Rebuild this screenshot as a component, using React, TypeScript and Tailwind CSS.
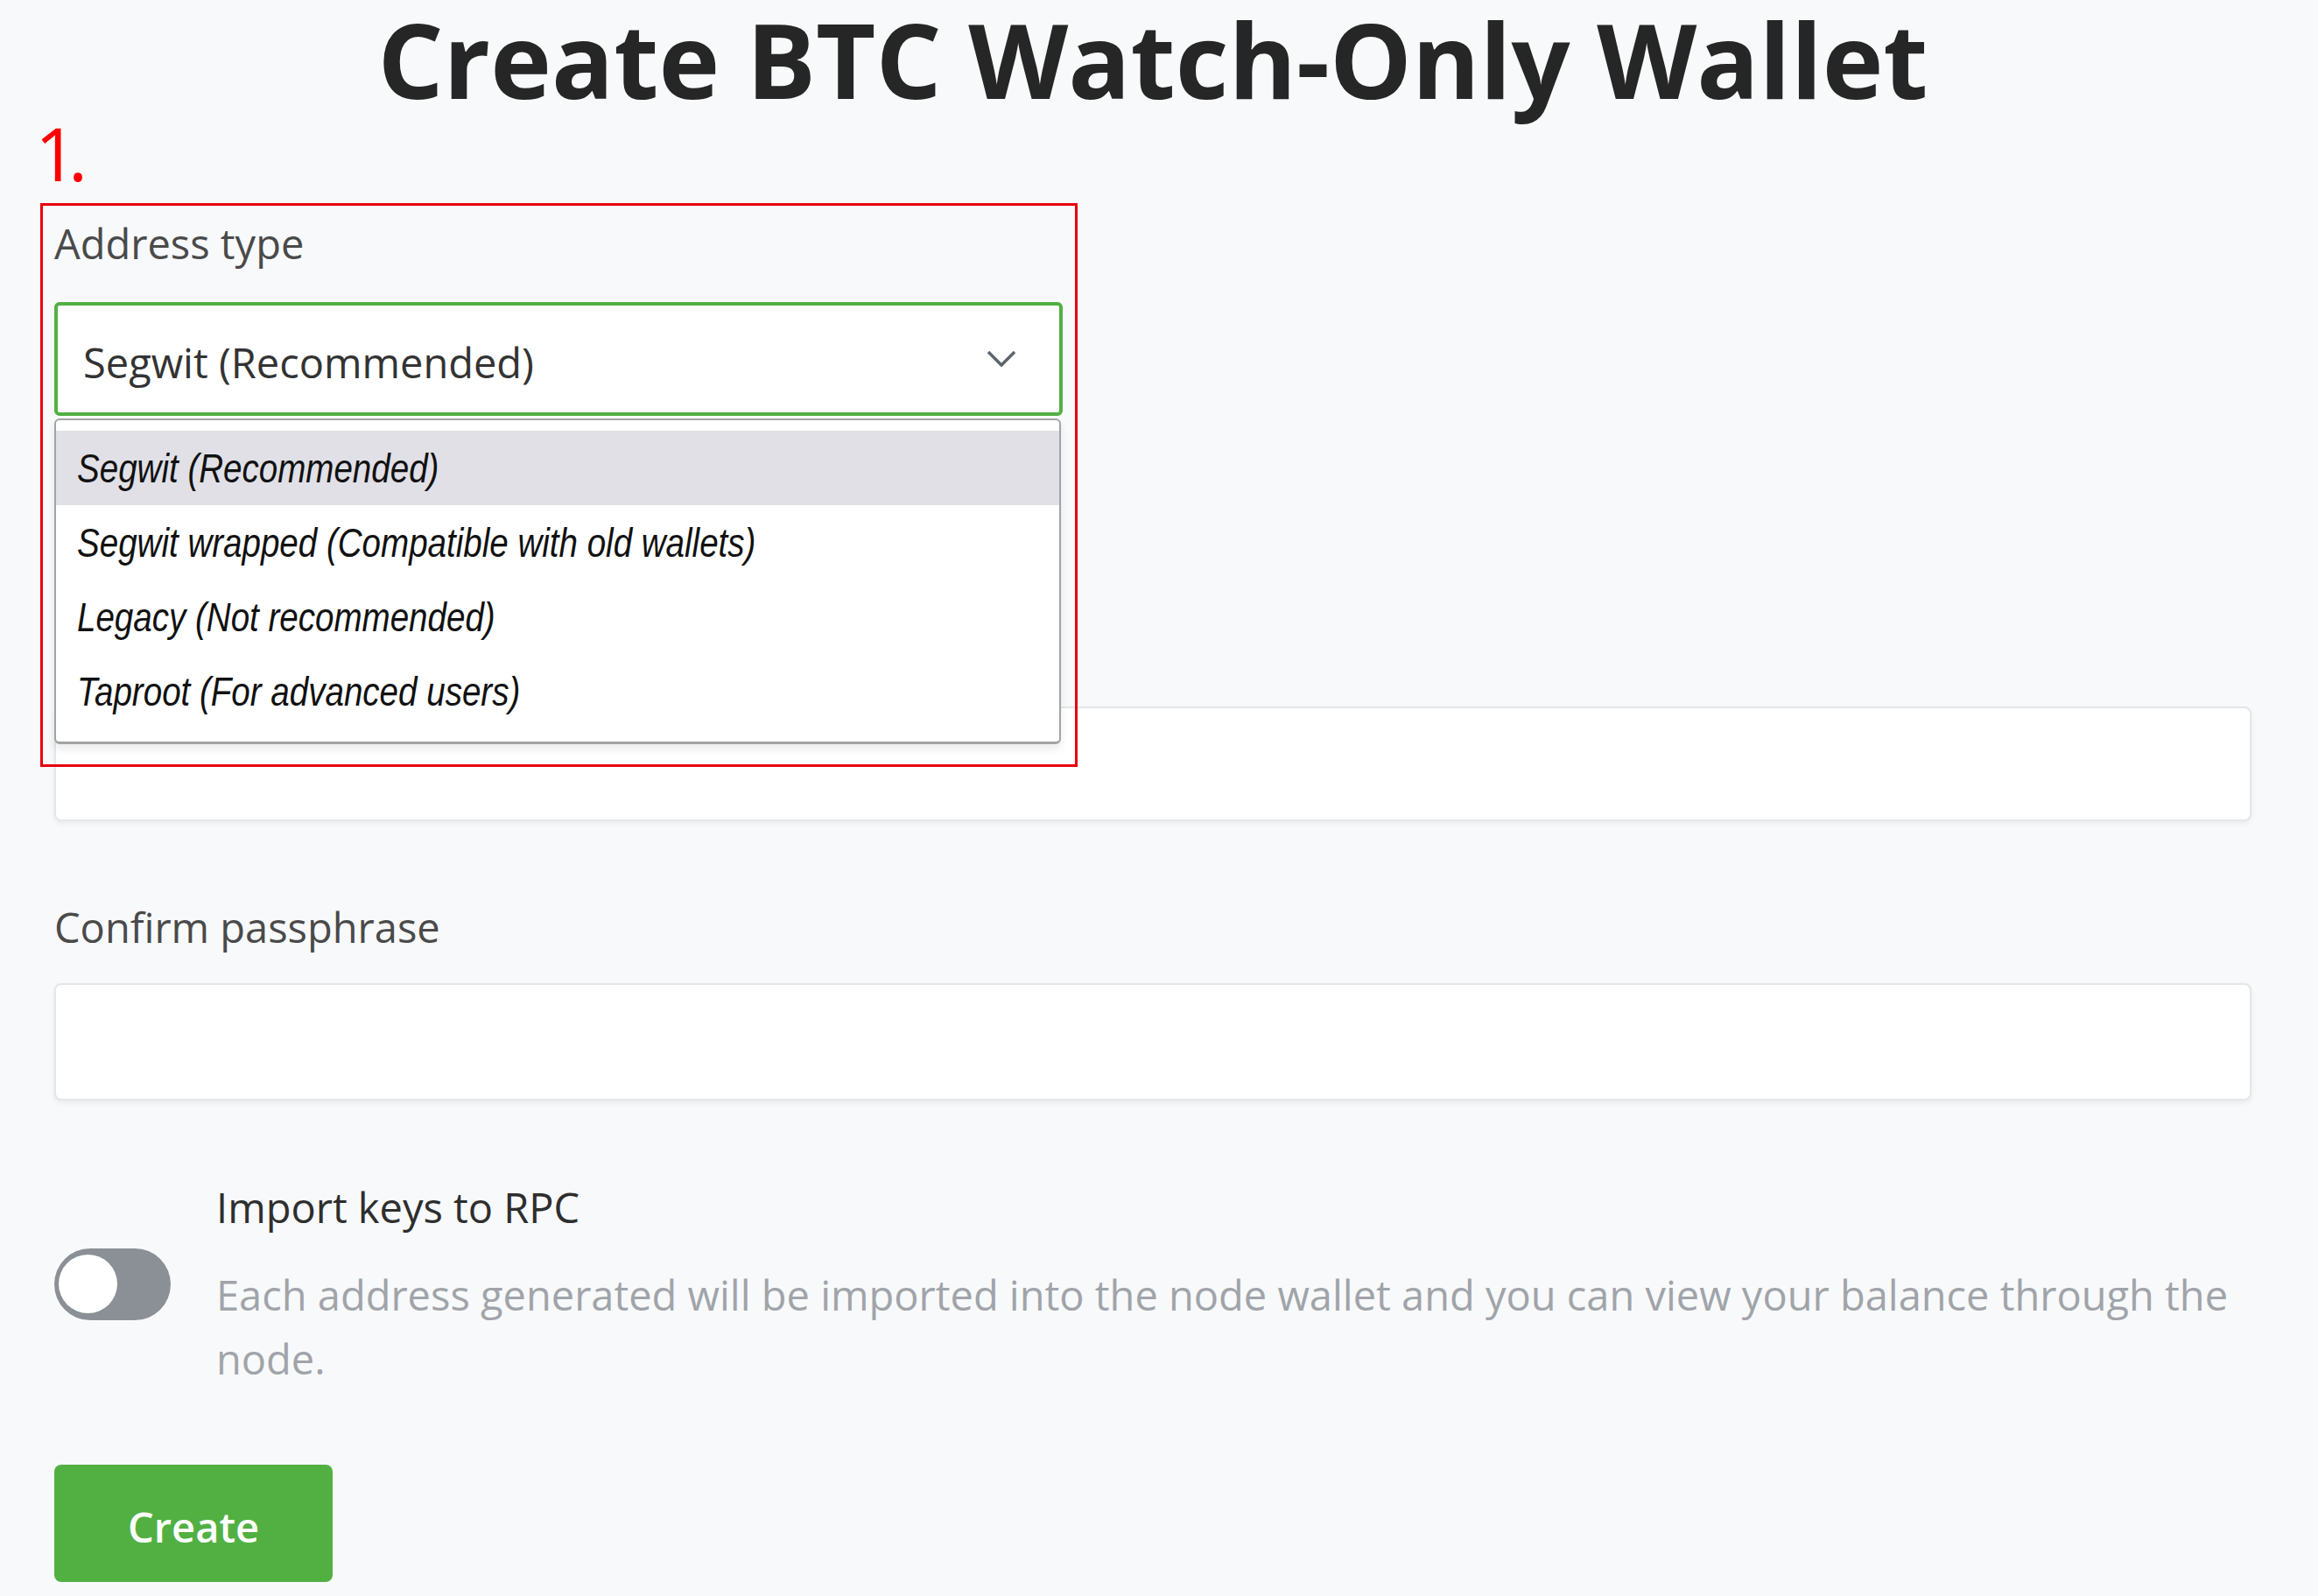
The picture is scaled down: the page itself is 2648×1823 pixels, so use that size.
import { useState } from 'react'

const options = [
  'Segwit (Recommended)',
  'Segwit wrapped (Compatible with old wallets)',
  'Legacy (Not recommended)',
  'Taproot (For advanced users)',
]

const App = () => {
  const [selected] = useState(0)
  const [importKeys, setImportKeys] = useState(false)

  return (
    <div className="min-h-screen bg-[#f8f9fb] font-['Open_Sans',sans-serif] text-[47px] leading-[70px] text-[#333]">
      <div className="pl-[62px] pr-[76px]">
        {/* Title */}
        <h1 className="text-center text-[118px] leading-[136px] font-bold text-[#262626]">
          Create BTC Watch-Only Wallet
        </h1>

        {/* Annotation number */}
        <div className="mt-[3px] -ml-[22px] text-[84px] leading-[72px] tracking-[-10px] text-[#ff0000]">1.</div>

        {/* Address type */}
        <div className="relative mt-[32px] w-[1152px]">
          {/* red annotation frame */}
          <div className="pointer-events-none absolute -left-[16px] -top-[11px] z-20 h-[644px] w-[1185px] border-[3px] border-[#e8000b]" />

          <label className="block text-[#4a4a4a]">Address type</label>
          <div className="relative mt-[32px]">
            <div className="flex h-[130px] items-center justify-between rounded-[6px] border-4 border-[#52b043] bg-white pl-[29px] pr-[48px]">
              <span className="pt-[8px] text-[#333]">{options[selected]}</span>
              <svg width="36" height="24" viewBox="0 0 36 24" fill="none" className="text-[#5f656d]">
                <polyline points="3,4 18,19 33,4" stroke="currentColor" strokeWidth="3.5" strokeLinejoin="miter" />
              </svg>
            </div>

            {/* open dropdown list */}
            <ul className="absolute left-0 top-[calc(100%+3px)] z-10 w-[1150px] rounded-[6px] border-2 border-b-[3px] border-[#a3a3a3] bg-white pt-[12px] pb-[15px] shadow-[0_6px_10px_rgba(0,0,0,0.08)] font-['Liberation_Sans_Narrow','Arial_Narrow','Liberation_Sans',sans-serif] italic text-[47px] leading-[85px] text-[#111]">
              {options.map((o, i) => (
                <li key={o} className={`pl-[24px] ${i === selected ? 'bg-[#e0e0e6]' : ''}`}>
                  <span className="inline-block origin-left scale-x-[0.82] whitespace-nowrap">{o}</span>
                </li>
              ))}
            </ul>
          </div>
        </div>

        {/* Passphrase (its label sits under the open list) */}
        <input
          type="password"
          aria-label="Passphrase"
          className="mt-[332px] block h-[131px] w-full rounded-[8px] border-2 border-[#e4e6e9] bg-white shadow-[0_3px_6px_rgba(0,0,0,0.06)] outline-none"
        />

        {/* Confirm passphrase */}
        <label className="mt-[86px] block text-[#4a4a4a]">Confirm passphrase</label>
        <input
          type="password"
          className="mt-[29px] block h-[134px] w-full rounded-[8px] border-2 border-[#e4e6e9] bg-white shadow-[0_3px_6px_rgba(0,0,0,0.06)] outline-none"
        />

        {/* Import keys toggle */}
        <div className="mt-[87px] flex items-center gap-[52px]">
          <button
            onClick={() => setImportKeys(!importKeys)}
            className={`flex h-[82px] w-[133px] shrink-0 items-center rounded-full px-[5px] ${importKeys ? 'justify-end bg-[#52b043]' : 'bg-[#8b9096]'}`}
          >
            <span className="block h-[67px] w-[67px] rounded-full bg-white" />
          </button>
          <div>
            <div className="text-[#2e2e2e]">Import keys to RPC</div>
            <p className="mt-[29px] leading-[73px] text-[#a0a4a9]">
              Each address generated will be imported into the node wallet and you can view your balance through the node.
            </p>
          </div>
        </div>

        {/* Create */}
        <button className="mt-[84px] flex h-[134px] items-center rounded-[8px] bg-[#52b043] px-[84px] font-semibold text-white">
          <span className="pt-[8px]">Create</span>
        </button>
      </div>
    </div>
  )
}

export default App
